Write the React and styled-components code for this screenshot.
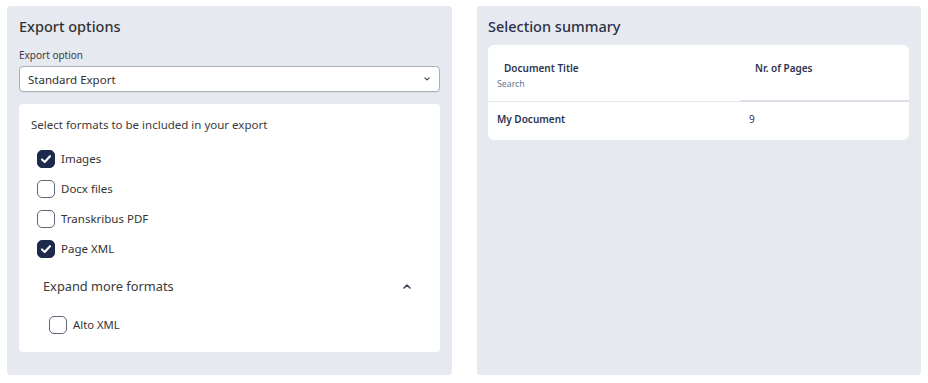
import React from "react";
import styled, { createGlobalStyle } from "styled-components";

const Global = createGlobalStyle`
  html, body { margin: 0; padding: 0; background: #ffffff; }
  body { font-family: "Noto Sans", "Open Sans", sans-serif; color: #3a3a3a; }
  * { box-sizing: border-box; }
`;

const Page = styled.div`
  display: grid;
  grid-template-columns: 445px 444px;
  column-gap: 25px;
  padding: 6px 7px;
  width: 928px;
  height: 383px;
`;

const Panel = styled.section`
  background: #e7e9f1;
  border-radius: 3px;
  padding: 10px 12px 12px ${(p) => (p.$right ? 11 : 12)}px;
  height: 369px;
  display: flex;
  flex-direction: column;
`;

const Title = styled.h2`
  margin: 0 0 ${(p) => (p.$navy ? 9 : 12)}px;
  font-size: 14.5px;
  line-height: 20px;
  font-weight: 500;
  color: ${(p) => (p.$navy ? "#2a3147" : "#333333")};
`;

const FieldLabel = styled.label`
  font-size: 10px;
  line-height: 14px;
  color: #3a3a3a;
  margin-bottom: 4px;
`;

const Select = styled.div`
  height: 26px;
  background: #fff;
  border: 1px solid #a9adb8;
  border-radius: 4px;
  display: flex;
  align-items: center;
  justify-content: space-between;
  padding: 0 9px 0 8px;
  font-size: 11.5px;
  color: #2f2f2f;
  box-shadow: 0 1px 1px rgba(0, 0, 0, 0.06);
`;

const Card = styled.div`
  margin-top: 12px;
  background: #fff;
  border-radius: 4px;
  padding: 13px 12px 0;
  height: 248px;
`;

const Intro = styled.p`
  margin: 0 0 17px;
  font-size: 11.5px;
  line-height: 16px;
  color: #3a3a3a;
`;

const List = styled.div`
  display: flex;
  flex-direction: column;
  gap: 12px;
  padding-left: ${(p) => p.$indent || 6}px;
`;

const Row = styled.label`
  display: flex;
  align-items: center;
  gap: 6px;
  height: 18px;
  font-size: ${(p) => (p.$small ? 11.3 : 11.5)}px;
  line-height: 18px;
  color: #333;
`;

const Box = styled.span`
  width: 18px;
  height: 18px;
  border-radius: 5px;
  border: 1.5px solid ${(p) => (p.$checked ? "#1e2a4c" : "#5d6475")};
  background: ${(p) => (p.$checked ? "#1e2a4c" : "#fff")};
  display: flex;
  align-items: center;
  justify-content: center;
  flex: 0 0 auto;
`;

const Expander = styled.div`
  margin: 19px 0 21px 12px;
  display: flex;
  align-items: center;
  justify-content: space-between;
  padding-right: 17px;
  font-size: 12.8px;
  line-height: 18px;
  color: #3a3a3a;
`;

const TableCard = styled.div`
  background: #fff;
  border-radius: 6px;
  overflow: hidden;
`;

const Table = styled.table`
  width: 100%;
  border-collapse: separate;
  border-spacing: 0;
  table-layout: fixed;
`;

const Th = styled.th`
  text-align: left;
  vertical-align: top;
  padding: 16px 10px ${(p) => (p.$thick ? 10 : 11)}px ${(p) => p.$left}px;
  font-size: 10px;
  line-height: 14px;
  font-weight: 600;
  color: #2b3452;
  border-bottom: ${(p) => (p.$thick ? "2px solid #dcdfe8" : "1px solid #e6e8ee")};
`;

const SearchHint = styled.div`
  margin: 3px 0 0 -7px;
  font-size: 8.75px;
  line-height: 12px;
  font-weight: 400;
  color: #6b7590;
`;

const Td = styled.td`
  padding: 10px 10px 14px 9px;
  font-size: 10px;
  line-height: 14px;
  font-weight: ${(p) => (p.$bold ? 600 : 400)};
  color: #2b3452;
`;

const Check = () => (
  <svg width="12" height="12" viewBox="0 0 12 12">
    <path d="M2 6.4 L4.7 9 L10 3.2" fill="none" stroke="#fff" strokeWidth="2.1" strokeLinecap="round" strokeLinejoin="round" />
  </svg>
);

const Chevron = ({ up, size = 8 }) => (
  <svg width={size} height={size * 0.625} viewBox="0 0 8 5">
    <path d={up ? "M1 4 L4 1 L7 4" : "M1.2 1.2 L4 3.8 L6.8 1.2"} fill="none" stroke="#3f4656" strokeWidth="1.6" strokeLinecap="round" strokeLinejoin="round" />
  </svg>
);

const Option = ({ label, checked, small }) => (
  <Row $small={small}>
    <Box $checked={checked}>{checked && <Check />}</Box>
    {label}
  </Row>
);

export default function App() {
  return (
    <>
      <Global />
      <Page>
        <Panel>
          <Title>Export options</Title>
          <FieldLabel>Export option</FieldLabel>
          <Select>
            <span>Standard Export</span>
            <Chevron size={6} />
          </Select>
          <Card>
            <Intro>Select formats to be included in your export</Intro>
            <List>
              <Option label="Images" checked />
              <Option label="Docx files" />
              <Option label="Transkribus PDF" />
              <Option label="Page XML" checked />
            </List>
            <Expander>
              <span>Expand more formats</span>
              <Chevron up />
            </Expander>
            <List $indent={18}>
              <Option label="Alto XML" small />
            </List>
          </Card>
        </Panel>
        <Panel $right>
          <Title $navy>Selection summary</Title>
          <TableCard>
            <Table>
              <colgroup>
                <col style={{ width: "252px" }} />
                <col />
              </colgroup>
              <thead>
                <tr>
                  <Th $left={16}>
                    Document Title
                    <SearchHint>Search</SearchHint>
                  </Th>
                  <Th $left={15} $thick>Nr. of Pages</Th>
                </tr>
              </thead>
              <tbody>
                <tr>
                  <Td $bold>My Document</Td>
                  <Td>9</Td>
                </tr>
              </tbody>
            </Table>
          </TableCard>
        </Panel>
      </Page>
    </>
  );
}
